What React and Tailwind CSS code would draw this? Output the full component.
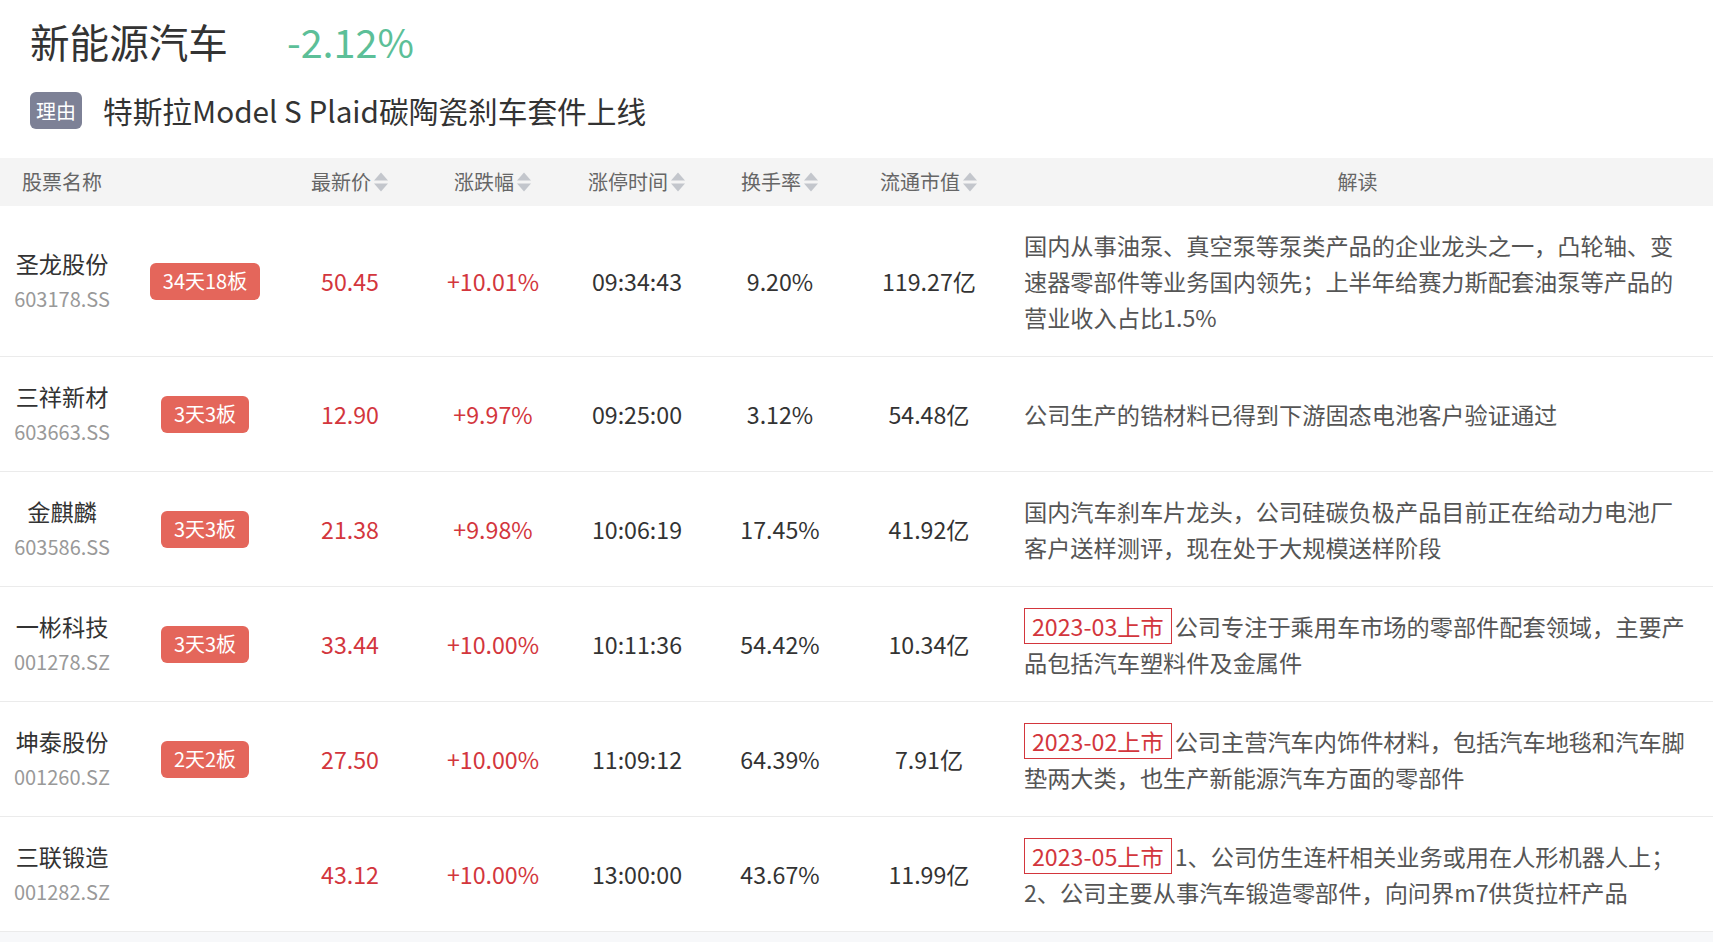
import React from "react";

const cols = "grid grid-cols-[124px_162px_128px_158px_130px_156px_142px_1fr]";

const rows = [
  {
    name: "圣龙股份",
    code: "603178.SS",
    badge: "34天18板",
    price: "50.45",
    change: "+10.01%",
    time: "09:34:43",
    turnover: "9.20%",
    cap: "119.27亿",
    text: "国内从事油泵、真空泵等泵类产品的企业龙头之一，凸轮轴、变速器零部件等业务国内领先；上半年给赛力斯配套油泵等产品的营业收入占比1.5%",
  },
  {
    name: "三祥新材",
    code: "603663.SS",
    badge: "3天3板",
    price: "12.90",
    change: "+9.97%",
    time: "09:25:00",
    turnover: "3.12%",
    cap: "54.48亿",
    text: "公司生产的锆材料已得到下游固态电池客户验证通过",
  },
  {
    name: "金麒麟",
    code: "603586.SS",
    badge: "3天3板",
    price: "21.38",
    change: "+9.98%",
    time: "10:06:19",
    turnover: "17.45%",
    cap: "41.92亿",
    text: "国内汽车刹车片龙头，公司硅碳负极产品目前正在给动力电池厂客户送样测评，现在处于大规模送样阶段",
  },
  {
    name: "一彬科技",
    code: "001278.SZ",
    badge: "3天3板",
    price: "33.44",
    change: "+10.00%",
    time: "10:11:36",
    turnover: "54.42%",
    cap: "10.34亿",
    tag: "2023-03上市",
    text: "公司专注于乘用车市场的零部件配套领域，主要产品包括汽车塑料件及金属件",
  },
  {
    name: "坤泰股份",
    code: "001260.SZ",
    badge: "2天2板",
    price: "27.50",
    change: "+10.00%",
    time: "11:09:12",
    turnover: "64.39%",
    cap: "7.91亿",
    tag: "2023-02上市",
    text: "公司主营汽车内饰件材料，包括汽车地毯和汽车脚垫两大类，也生产新能源汽车方面的零部件",
  },
  {
    name: "三联锻造",
    code: "001282.SZ",
    badge: null,
    price: "43.12",
    change: "+10.00%",
    time: "13:00:00",
    turnover: "43.67%",
    cap: "11.99亿",
    tag: "2023-05上市",
    text: "1、公司仿生连杆相关业务或用在人形机器人上；2、公司主要从事汽车锻造零部件，向问界m7供货拉杆产品",
  },
];

function SortArrows() {
  return (
    <svg width="16" height="22" viewBox="0 0 16 22" className="ml-[2px]">
      <path d="M8 1.5 L15 9.5 L1 9.5 Z" fill="#c3c6cc" />
      <path d="M8 20.5 L15 12.5 L1 12.5 Z" fill="#c3c6cc" />
    </svg>
  );
}

function HeadCell({ label, sort }) {
  return (
    <div className="flex items-center justify-center">
      <span>{label}</span>
      {sort && <SortArrows />}
    </div>
  );
}

export default function App() {
  return (
    <div
      className="w-[1713px] h-[942px] bg-white text-[#333] overflow-hidden flex flex-col"
      style={{ fontFamily: '"Noto Sans CJK SC", "Noto Sans", sans-serif' }}
    >
      <div className="pt-[16px] pl-[30px] pb-[29px]">
        <div className="flex items-center h-[50px]">
          <span className="text-[39.6px] leading-[50px] text-[#333]">新能源汽车</span>
          <span className="ml-[59px] text-[39.6px] leading-[50px] text-[#5cbf98]">-2.12%</span>
        </div>
        <div className="flex items-center mt-[26px]">
          <span className="h-[37px] w-[52px] rounded-[6px] bg-[#7d8196] text-white text-[20px] flex items-center justify-center">
            理由
          </span>
          <span className="ml-[21px] text-[29.7px] leading-[37px] text-[#333]">
            特斯拉Model S Plaid碳陶瓷刹车套件上线
          </span>
        </div>
      </div>

      <div className={`${cols} h-[48px] items-center bg-[#f4f4f4] text-[20px] text-[#666]`}>
        <HeadCell label="股票名称" />
        <div />
        <HeadCell label="最新价" sort />
        <HeadCell label="涨跌幅" sort />
        <HeadCell label="涨停时间" sort />
        <HeadCell label="换手率" sort />
        <HeadCell label="流通市值" sort />
        <div className="text-center pl-[2px]">解读</div>
      </div>

      {rows.map((r) => (
        <div
          key={r.code}
          className={`${cols} items-center py-[21px] border-b border-[#ebebeb] text-[23.2px]`}
        >
          <div className="flex flex-col items-center">
            <span className="leading-[36px] text-[#333]">{r.name}</span>
            <span className="leading-[36px] text-[20px] text-[#999]">{r.code}</span>
          </div>
          <div className="flex justify-center">
            {r.badge && (
              <span className="h-[37px] px-[13px] rounded-[6px] bg-[#e4665b] text-white text-[20px] flex items-center">
                {r.badge}
              </span>
            )}
          </div>
          <div className="text-center text-[#d3363d]">{r.price}</div>
          <div className="text-center text-[#d3363d]">{r.change}</div>
          <div className="text-center">{r.time}</div>
          <div className="text-center">{r.turnover}</div>
          <div className="text-center">{r.cap}</div>
          <div className="pl-[24px] pr-[20px] leading-[36px] text-[#555]">
            {r.tag && (
              <span className="inline-block align-top mr-[3px] px-[7px] leading-[34px] border border-[#d3363d] text-[#d3363d]">
                {r.tag}
              </span>
            )}
            {r.text}
          </div>
        </div>
      ))}

      <div className="flex-1 bg-[#f7f8fa]" />
    </div>
  );
}
